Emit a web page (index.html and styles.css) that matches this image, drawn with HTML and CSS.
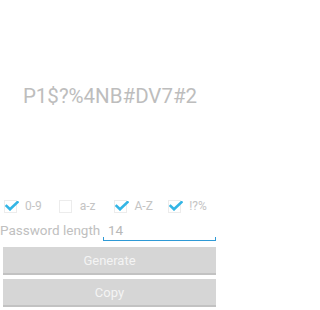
FILE: index.html
```html
<!DOCTYPE html>
<html>
<head>
<meta charset="utf-8">
<link rel="stylesheet" href="styles.css">
</head>
<body>
<div class="app">
  <div class="display">
    <div class="password">P1$?%4NB#DV7#2</div>
  </div>
  <div class="options">
    <label class="opt">
      <span class="box"><svg class="check" viewBox="0 0 14 10" width="14" height="10"><path d="M1.5 5 L5 8.3 L12.5 1.2" fill="none" stroke="#33b5e5" stroke-width="2.6" stroke-linecap="square"/></svg></span>
      <span class="lbl">0-9</span>
    </label>
    <label class="opt">
      <span class="box"></span>
      <span class="lbl">a-z</span>
    </label>
    <label class="opt">
      <span class="box"><svg class="check" viewBox="0 0 14 10" width="14" height="10"><path d="M1.5 5 L5 8.3 L12.5 1.2" fill="none" stroke="#33b5e5" stroke-width="2.6" stroke-linecap="square"/></svg></span>
      <span class="lbl">A-Z</span>
    </label>
    <label class="opt">
      <span class="box"><svg class="check" viewBox="0 0 14 10" width="14" height="10"><path d="M1.5 5 L5 8.3 L12.5 1.2" fill="none" stroke="#33b5e5" stroke-width="2.6" stroke-linecap="square"/></svg></span>
      <span class="lbl">!?%</span>
    </label>
  </div>
  <div class="length">
    <span class="len-label">Password length</span>
    <div class="field"><span class="value">14</span></div>
  </div>
  <div class="buttons">
    <div class="btn">Generate</div>
    <div class="btn">Copy</div>
  </div>
</div>
</body>
</html>
```

FILE: styles.css
```css
html, body {
  margin: 0;
  padding: 0;
  background: #ffffff;
}
body {
  font-family: Roboto, "Liberation Sans", sans-serif;
}
.app {
  width: 219px;
  height: 310px;
  display: flex;
  flex-direction: column;
}
.display {
  height: 192px;
  display: flex;
  align-items: center;
  justify-content: center;
}
.password {
  font-size: 20.5px;
  color: #bdbdbd;
  padding-left: 1px;
}
.options {
  height: 24px;
  padding-top: 4px;
  box-sizing: border-box;
  display: grid;
  grid-template-columns: repeat(4, 1fr);
  align-items: center;
}
.opt {
  display: flex;
  align-items: center;
  padding-left: 4px;
}
.box {
  width: 11px;
  height: 11px;
  border: 1px solid #ececec;
  position: relative;
  flex: none;
}
.check {
  position: absolute;
  left: 0;
  top: 0;
}
.lbl {
  margin-left: 8px;
  font-size: 12px;
  color: #c4c4c4;
}
.length {
  height: 30px;
  display: flex;
  align-items: flex-start;
  padding-top: 6px;
  box-sizing: border-box;
}
.len-label {
  font-size: 13.5px;
  color: #c0c0c0;
  line-height: 17px;
  width: 103px;
  flex: none;
}
.field {
  width: 113px;
  height: 19px;
  box-sizing: border-box;
  border-bottom: 1.5px solid #2f9ad6;
  position: relative;
}
.field::before,
.field::after {
  content: "";
  position: absolute;
  bottom: 0;
  width: 1px;
  height: 3px;
  background: #2f9ad6;
}
.field::before { left: 0; }
.field::after { right: 0; }
.value {
  display: block;
  font-size: 13.5px;
  color: #b8b8b8;
  line-height: 17px;
  padding-left: 5px;
}
.buttons {
  display: flex;
  flex-direction: column;
  gap: 4px;
  padding: 1px 3px 3px 3px;
}
.btn {
  height: 28px;
  box-sizing: border-box;
  background: #d6d6d6;
  border-bottom: 2px solid #c2c2c2;
  color: #f4f4f4;
  font-size: 13px;
  display: flex;
  align-items: center;
  justify-content: center;
}
```
